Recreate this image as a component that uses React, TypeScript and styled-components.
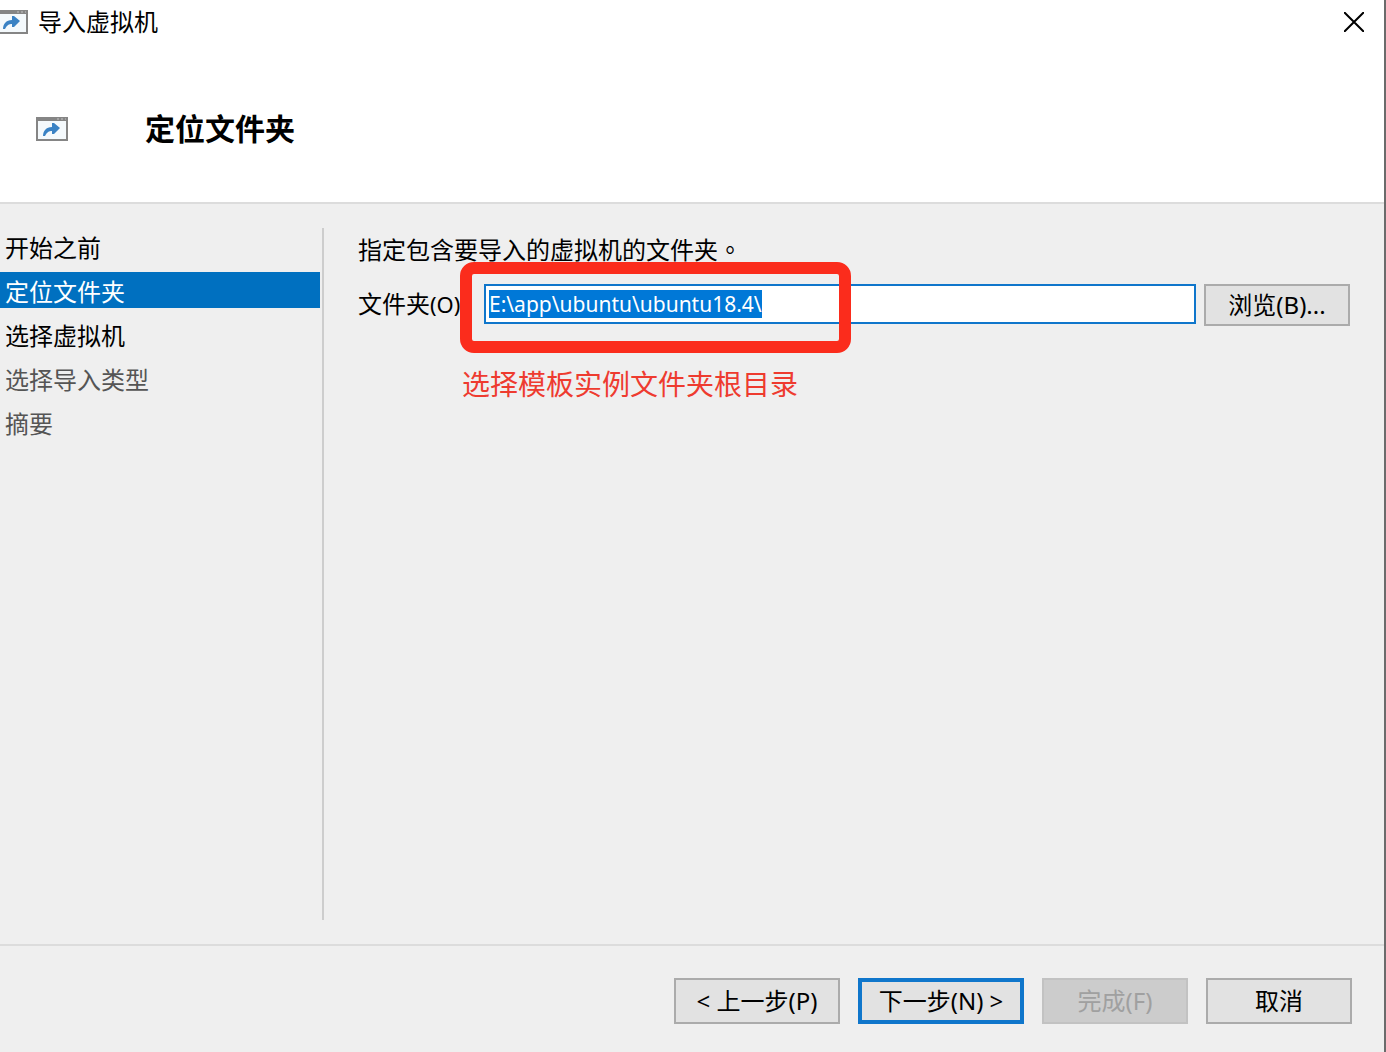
import React, { useEffect, useRef } from "react";
import styled, { createGlobalStyle, css } from "styled-components";

const GlobalStyle = createGlobalStyle`
  *, *::before, *::after { box-sizing: border-box; }
  body {
    margin: 0;
    background: #efefef;
    color: #000;
    font-family: "Noto Sans", "Noto Sans CJK SC", sans-serif;
    font-size: 24px;
    line-height: 36px;
  }
  h1, h2, p, ol { margin: 0; padding: 0; }
  button, input { font: inherit; color: inherit; }
`;

const Dialog = styled.main`
  display: flex;
  flex-direction: column;
  min-height: 100vh;
  border-right: 2px solid #6b6b6b;
  background: #efefef;
`;

const TitleBar = styled.header`
  display: flex;
  align-items: center;
  height: 44px;
  padding-right: 20px;
  background: #fff;
`;

const TitleIcon = styled.span`
  display: flex;
  margin: 0 10px 0 -4px;
`;

const Title = styled.h1`
  flex: 1;
  font-size: 24px;
  font-weight: 400;
`;

const CloseButton = styled.button`
  display: flex;
  padding: 0;
  border: 0;
  background: none;
`;

const Banner = styled.section`
  display: flex;
  align-items: center;
  gap: 77px;
  height: 160px;
  padding: 12px 36px 0;
  border-bottom: 2px solid #dcdcdc;
  background: #fff;
`;

const Heading = styled.h2`
  font-size: 30px;
  font-weight: 700;
`;

const Body = styled.div`
  display: flex;
  flex: 1;
  padding: 24px 0;
`;

const Sidebar = styled.nav`
  flex: 0 0 324px;
  padding-right: 2px;
  border-right: 2px solid #cdcdcd;
`;

const StepList = styled.ol`
  display: flex;
  flex-direction: column;
  gap: 8px;
  list-style: none;
`;

type StepState = "open" | "current" | "locked";

const Step = styled.li<{ $state: StepState }>`
  height: 36px;
  padding: 2px 5px;
  background: ${(p) => (p.$state === "current" ? "#0070c0" : "transparent")};
  color: ${(p) =>
    p.$state === "current" ? "#fff" : p.$state === "locked" ? "#555" : "#000"};
`;

const Content = styled.section`
  flex: 1;
  min-width: 0;
  padding: 3px 34px 0;
`;

const FullStop = styled.span`
  font-family: "Noto Sans CJK TC", sans-serif;
`;

const FieldRow = styled.div`
  display: flex;
  align-items: flex-start;
  gap: 8px;
  margin-top: 16px;
`;

const Label = styled.label`
  flex: 0 0 118px;
  line-height: 40px;
  white-space: nowrap;
`;

const AccessKey = styled.span`
  font-size: 22px;
`;

const Field = styled.div`
  position: relative;
  flex: 1;
  min-width: 0;
`;

const PathInput = styled.input`
  display: block;
  width: 100%;
  height: 40px;
  padding: 0 3px;
  border: 2px solid #0f76cb;
  border-radius: 0;
  outline: none;
  background: #fff;
  line-height: 26px;
  font-size: 21px;

  &::selection {
    background: #0078d7;
    color: #fff;
  }
`;

const Callout = styled.div`
  position: absolute;
  top: -22px;
  left: -24px;
  pointer-events: none;
`;

const CalloutFrame = styled.div`
  width: 391px;
  height: 91px;
  border: 12px solid #fb2c1c;
  border-radius: 14px;
`;

const CalloutText = styled.p`
  margin-top: 13px;
  padding-left: 2px;
  color: #ee3b2f;
  font-size: 28px;
  white-space: nowrap;
`;

const Button = styled.button<{ $wide?: boolean; $primary?: boolean; $compact?: boolean }>`
  width: ${(p) => (p.$wide ? 166 : 146)}px;
  height: ${(p) => (p.$compact ? 42 : 46)}px;
  padding: 0;
  border: 2px solid #ababab;
  border-radius: 0;
  background: #e2e2e2;
  line-height: 36px;
  white-space: nowrap;

  ${(p) =>
    p.$primary &&
    css`
      border: 4px solid #0f76cb;
    `}

  &:disabled {
    border-color: #c2c2c2;
    background: #cccccc;
    color: #a0a0a0;
  }
`;

const Footer = styled.footer`
  display: flex;
  justify-content: flex-end;
  gap: 18px;
  padding: 32px 32px 28px;
  border-top: 2px solid #dcdcdc;
`;

const steps: { name: string; state: StepState }[] = [
  { name: "开始之前", state: "open" },
  { name: "定位文件夹", state: "current" },
  { name: "选择虚拟机", state: "open" },
  { name: "选择导入类型", state: "locked" },
  { name: "摘要", state: "locked" },
];

function ImportIcon() {
  return (
    <svg width="32" height="24" viewBox="0 0 32 24" aria-hidden="true">
      <rect x="1" y="1" width="30" height="22" fill="#f4f9fc" stroke="#858585" strokeWidth="2" />
      <path d="M0 0h32v4H0z" fill="#858585" />
      <path d="M21 2h2M25 2h2M29 2h1" stroke="#c4c4c4" strokeWidth="1" />
      <path d="M7 19c0-5 3-9 9-9V6h2l6 5-6 6h-2v-3c-3 0-5 1-7 5z" fill="#3a82c4" />
    </svg>
  );
}

function CloseIcon() {
  return (
    <svg width="20" height="20" viewBox="0 0 20 20" aria-hidden="true">
      <path d="M0 0l20 20M20 0L0 20" stroke="#000" strokeWidth="2" />
    </svg>
  );
}

export default function App() {
  const pathRef = useRef<HTMLInputElement>(null);

  useEffect(() => {
    pathRef.current?.focus();
    pathRef.current?.select();
  }, []);

  return (
    <>
      <GlobalStyle />
      <Dialog lang="zh-CN">
        <TitleBar>
          <TitleIcon>
            <ImportIcon />
          </TitleIcon>
          <Title>导入虚拟机</Title>
          <CloseButton type="button" aria-label="关闭">
            <CloseIcon />
          </CloseButton>
        </TitleBar>
        <Banner>
          <ImportIcon />
          <Heading>定位文件夹</Heading>
        </Banner>
        <Body>
          <Sidebar>
            <StepList>
              {steps.map((step) => (
                <Step key={step.name} $state={step.state}>
                  {step.name}
                </Step>
              ))}
            </StepList>
          </Sidebar>
          <Content>
            <p>
              指定包含要导入的虚拟机的文件夹<FullStop lang="zh-TW">。</FullStop>
            </p>
            <FieldRow>
              <Label htmlFor="folder">
                文件夹<AccessKey>(O)</AccessKey>
              </Label>
              <Field>
                <PathInput
                  id="folder"
                  ref={pathRef}
                  type="text"
                  spellCheck={false}
                  defaultValue={"E:\\app\\ubuntu\\ubuntu18.4\\"}
                />
                <Callout>
                  <CalloutFrame />
                  <CalloutText>选择模板实例文件夹根目录</CalloutText>
                </Callout>
              </Field>
              <Button type="button" $compact>
                浏览(B)...
              </Button>
            </FieldRow>
          </Content>
        </Body>
        <Footer>
          <Button type="button" $wide>
            &lt; 上一步(P)
          </Button>
          <Button type="button" $wide $primary>
            下一步(N) &gt;
          </Button>
          <Button type="button" disabled>
            完成(F)
          </Button>
          <Button type="button">取消</Button>
        </Footer>
      </Dialog>
    </>
  );
}
